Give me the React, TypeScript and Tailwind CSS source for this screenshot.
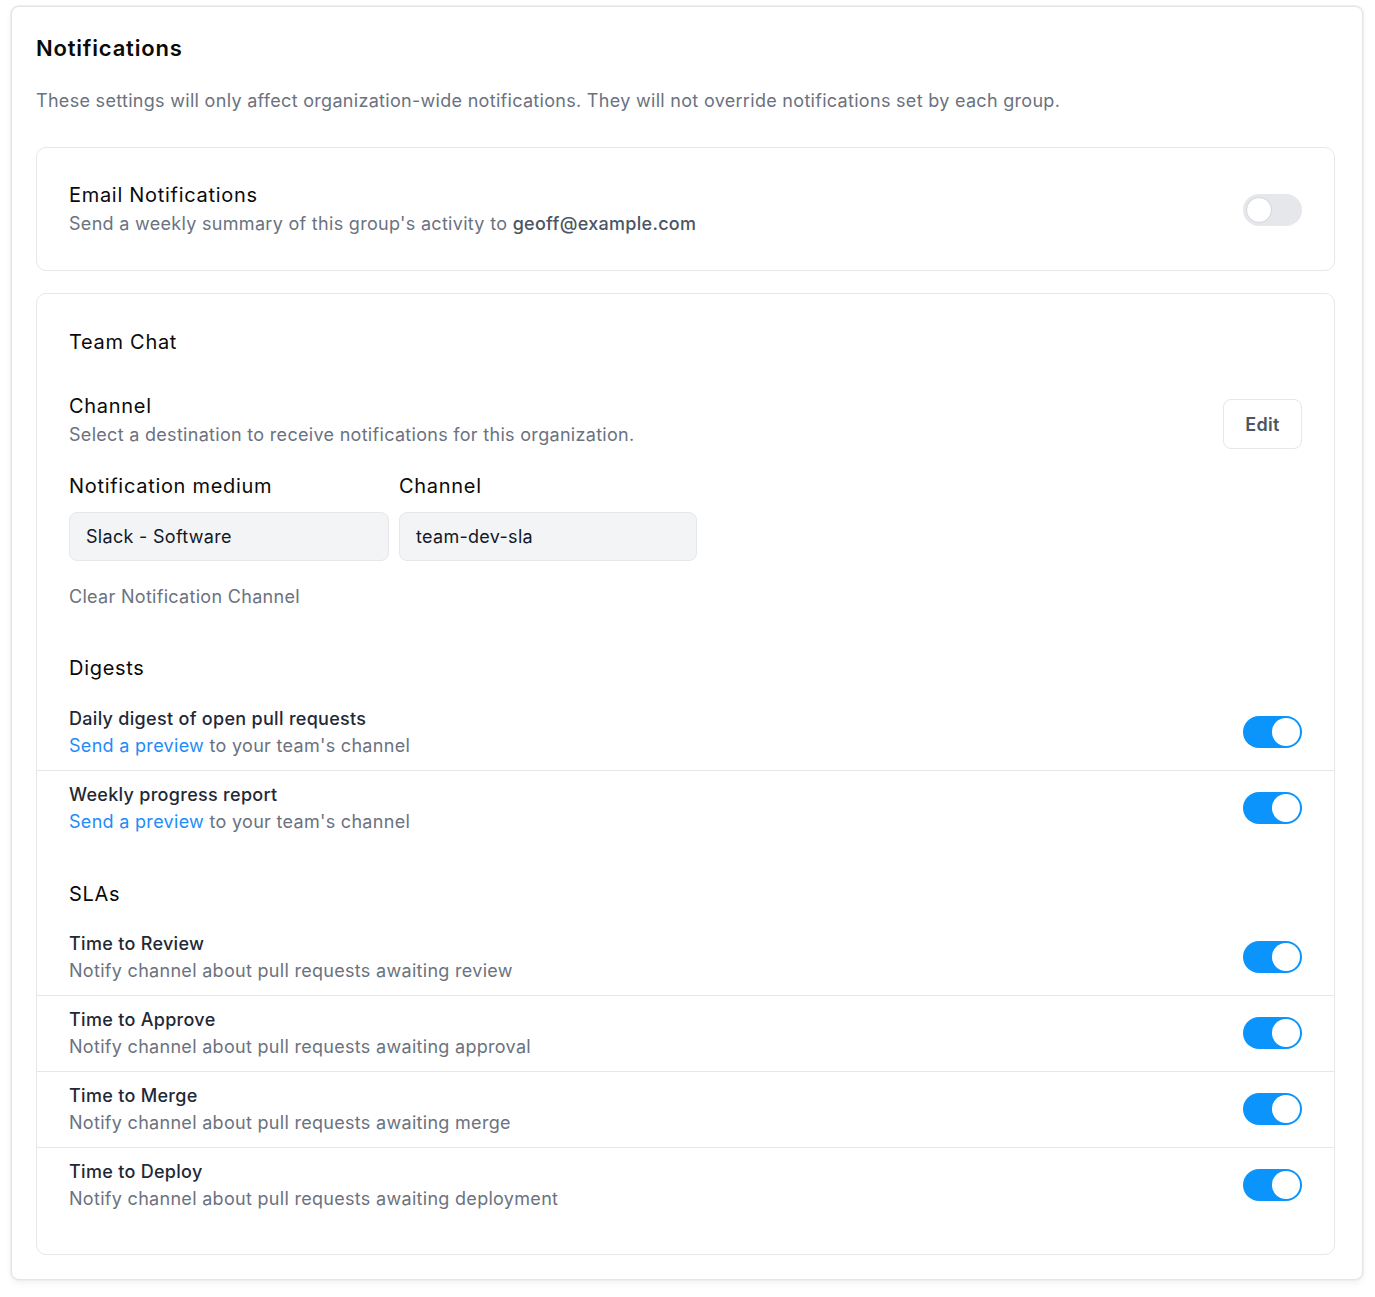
import React from "react";

function Toggle({ on }: { on: boolean }) {
  return on ? (
    <div className="flex h-8 w-[59px] shrink-0 items-center justify-end rounded-full bg-[#0b95fc] p-[2px]">
      <div className="h-[28px] w-[28px] rounded-full bg-white" />
    </div>
  ) : (
    <div className="flex h-8 w-[59px] shrink-0 items-center justify-start rounded-full bg-[#e5e7eb] p-[3px]">
      <div className="h-[26px] w-[26px] rounded-full border border-[#d1d5db] bg-white" />
    </div>
  );
}

function Row({
  title,
  sub,
  first,
}: {
  title: string;
  sub: React.ReactNode;
  first?: boolean;
}) {
  return (
    <div
      className={
        "flex items-center justify-between px-8 pb-[11px] " +
        (first ? "pt-[11px]" : "border-t border-[#e5e7eb] pt-[10px]")
      }
    >
      <div className="tracking-[0.3px]">
        <div className="text-[18px] font-medium leading-[27px] text-[#1f2937]">{title}</div>
        <div className="text-[18px] leading-[27px] text-[#6b7280]">{sub}</div>
      </div>
      <Toggle on />
    </div>
  );
}

const preview = (
  <>
    <span className="text-[#1e8cf9]">Send a preview</span> to your team's channel
  </>
);

const heading = "text-[20px] leading-[28px] tracking-[0.7px] text-[#0a0a0a]";

export default function App() {
  return (
    <div
      className="min-h-[1297px] bg-white pl-[11px] pr-[12px] pt-[6px] pb-4"
      style={{ fontFamily: "Inter, 'Noto Sans', sans-serif" }}
    >
      <div className="rounded-lg border border-[#e3e5e9] bg-white pl-6 pr-[27px] pt-[27px] pb-6 shadow-[0_0_0_1px_#eceef1,0_3px_6px_rgba(0,0,0,0.06)]">
        <h1 className="text-[22px] font-semibold leading-[28px] tracking-[0.8px] text-[#0a0a0a]">
          Notifications
        </h1>
        <p className="mt-[25px] text-[18px] leading-[27px] tracking-[0.3px] text-[#6b7280]">
          These settings will only affect organization-wide notifications. They will not override
          notifications set by each group.
        </p>

        <div className="mt-[33px] flex items-center justify-between rounded-[10px] border border-[#e5e7eb] px-8 pt-[33px] pb-8">
          <div>
            <div className={heading}>Email Notifications</div>
            <div className="mt-[1px] text-[18px] leading-[28px] tracking-[0.3px] text-[#6b7280]">
              Send a weekly summary of this group's activity to{" "}
              <span className="font-medium text-[#4b5563]">geoff@example.com</span>
            </div>
          </div>
          <Toggle on={false} />
        </div>

        <div className="mt-[22px] rounded-[10px] border border-[#e5e7eb] pt-[34px] pb-[31px]">
          <div className="px-8">
            <div className={heading}>Team Chat</div>

            <div className="mt-[36px] flex items-start justify-between">
              <div>
                <div className={heading}>Channel</div>
                <div className="mt-[1px] text-[18px] leading-[28px] tracking-[0.3px] text-[#6b7280]">
                  Select a destination to receive notifications for this organization.
                </div>
              </div>
              <button className="mt-[7px] h-[50px] w-[79px] rounded-lg border border-[#e5e7eb] bg-white text-[18px] font-semibold tracking-[0.3px] text-[#4b5563]">
                Edit
              </button>
            </div>

            <div className="mt-[23px] flex gap-[10px]">
              <div className="w-[320px]">
                <div className={heading}>Notification medium</div>
                <div className="mt-[12px] flex h-[49px] items-center rounded-lg border border-[#e5e7eb] bg-[#f3f4f6] px-4 text-[18px] tracking-[0.3px] text-[#111827]">
                  Slack - Software
                </div>
              </div>
              <div className="w-[298px]">
                <div className={heading}>Channel</div>
                <div className="mt-[12px] flex h-[49px] items-center rounded-lg border border-[#e5e7eb] bg-[#f3f4f6] px-4 text-[18px] tracking-[0.3px] text-[#111827]">
                  team-dev-sla
                </div>
              </div>
            </div>

            <div className="mt-[22px] text-[18px] leading-[27px] tracking-[0.3px] text-[#6b7280]">
              Clear Notification Channel
            </div>

            <div className={"mt-[44px] " + heading}>Digests</div>
          </div>
          <div className="mt-3">
            <Row first title="Daily digest of open pull requests" sub={preview} />
            <Row title="Weekly progress report" sub={preview} />
          </div>

          <div className={"mt-[34px] px-8 " + heading}>SLAs</div>
          <div className="mt-[11px]">
            <Row first title="Time to Review" sub="Notify channel about pull requests awaiting review" />
            <Row title="Time to Approve" sub="Notify channel about pull requests awaiting approval" />
            <Row title="Time to Merge" sub="Notify channel about pull requests awaiting merge" />
            <Row title="Time to Deploy" sub="Notify channel about pull requests awaiting deployment" />
          </div>
        </div>
      </div>
    </div>
  );
}
